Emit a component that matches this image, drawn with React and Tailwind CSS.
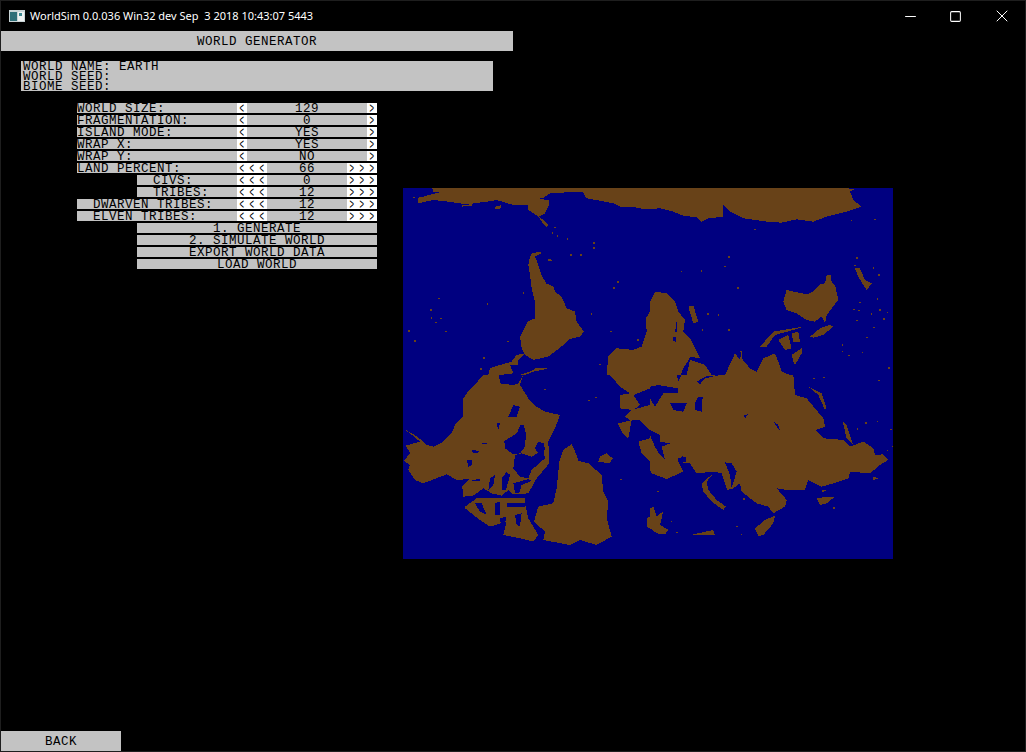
import { Minus, Square, X } from 'lucide-react'

const opciones = [
  { label: 'WORLD SIZE:', value: '129', step: 1 },
  { label: 'FRAGMENTATION:', value: '0', step: 1 },
  { label: 'ISLAND MODE:', value: 'YES', step: 1 },
  { label: 'WRAP X:', value: 'YES', step: 1 },
  { label: 'WRAP Y:', value: 'NO', step: 1 },
  { label: 'LAND PERCENT:', value: '66', step: 3 },
  { label: 'CIVS:', value: '0', step: 3, corto: true },
  { label: 'TRIBES:', value: '12', step: 3, corto: true },
  { label: 'DWARVEN TRIBES:', value: '12', step: 3, sangria: true },
  { label: 'ELVEN TRIBES:', value: '12', step: 3, sangria: true },
]

const acciones = ['1. GENERATE', '2. SIMULATE WORLD', 'EXPORT WORLD DATA', 'LOAD WORLD']

const Flechas = ({ glifo, step }) => (
  <div className={`flex bg-white ${step === 3 ? 'w-[30px]' : 'w-[10px]'}`}>
    {Array.from({ length: step }).map((_, i) => (
      <span key={i} className="w-[10px] text-center scale-x-[0.6] scale-y-[1.15]">{glifo}</span>
    ))}
  </div>
)

const Opcion = ({ label, value, step, corto, sangria }) => (
  <div className={`flex h-[10px] ${corto ? 'ml-[60px]' : ''}`}>
    <div className={`flex-1 bg-[#c3c3c3] whitespace-pre ${corto || sangria ? 'pl-[16px]' : ''}`}>{label}</div>
    <Flechas glifo="<" step={step} />
    <div className={`bg-[#c3c3c3] text-center ${step === 3 ? 'w-[80px]' : 'w-[120px]'}`}>{value}</div>
    <Flechas glifo=">" step={step} />
  </div>
)

// cuadrantes del mapa, trazados a escala 3x
const tierra = {
  q1: [
    'M97 10 L750 10 L750 72 L715 70 L700 65 L660 65 L640 55 L590 45 L565 42 L555 35 L550 22 L510 20 L480 24 L450 25 L430 38 L415 42 L447 45 L447 60 L435 85 L415 95 L400 85 L385 75 L385 60 L340 60 L290 45 L260 50 L200 58 L130 48 L100 45 L75 50 L55 55 L55 38 L70 35 L95 28 L120 22 L100 20 Z',
    'M395 205 L420 200 L425 205 L405 215 L415 240 L425 270 L438 295 L460 305 L465 320 L485 335 L500 370 L525 380 L530 410 L552 440 L540 455 L510 462 L490 480 L465 500 L445 515 L400 525 L375 510 L365 490 L360 455 L375 425 L385 408 L405 400 L405 350 L395 310 L390 270 L385 240 L390 215 Z',
    'M265 570 L270 550 L300 540 L335 530 L350 510 L375 505 L355 525 L355 540 L330 540 L340 565 L300 570 Z',
    'M360 570 L395 558 L410 548 L440 548 L440 552 L400 560 L375 570 Z',
    'M620 570 L625 515 L650 490 L700 495 L725 485 L740 440 L738 400 L750 380 L750 570 Z',
    'M415 95 L430 105 L445 120 L440 125 L425 110 Z',
    'M442 224 L450 220 L456 228 L444 228 Z',
    'M285 65 L305 60 L300 72 L285 72 Z',
    'M185 60 L215 58 L215 62 L185 65 Z',
  ],
  q2: [
    'M0 10 L590 10 L615 12 L600 20 L610 45 L635 65 L590 80 L530 95 L490 110 L440 103 L395 113 L350 110 L280 100 L240 80 L220 60 L220 95 L175 100 L155 110 L140 97 L100 92 L70 80 L30 70 L0 72 Z',
    'M400 350 L410 315 L440 322 L470 328 L490 320 L510 298 L525 295 L530 270 L542 270 L545 290 L555 300 L565 345 L545 370 L530 390 L525 415 L515 395 L495 410 L470 405 L440 385 L410 375 Z',
    'M615 250 L630 250 L645 285 L665 295 L650 315 L640 300 L625 275 Z',
    'M0 350 L15 320 L50 325 L75 350 L85 380 L105 405 L100 440 L120 460 L150 520 L122 515 L100 550 L92 570 L110 570 L120 525 L165 540 L185 570 L0 570 Z',
    'M115 365 L130 362 L145 410 L130 415 Z',
    'M225 570 L255 505 L270 525 L275 495 L275 520 L300 550 L320 560 L340 520 L375 505 L385 530 L395 560 L420 570 Z',
    'M385 465 L415 450 L425 490 L405 495 Z',
    'M480 455 L510 430 L540 420 L550 425 L520 450 L490 458 Z',
    'M330 485 L370 440 L430 430 L460 425 L430 435 L375 450 L350 485 Z',
    'M425 445 L445 440 L450 470 L430 470 Z',
    'M425 510 L455 490 L455 505 L435 540 L430 530 Z',
  ],
  q3: [
    'M250 0 L297 0 L300 25 L340 30 L355 25 L370 0 L360 30 L385 70 L410 95 L435 110 L480 120 L465 160 L445 200 L448 265 L410 310 L385 355 L340 358 L325 345 L305 362 L275 355 L250 340 L220 362 L190 365 L187 335 L210 312 L170 315 L140 298 L70 325 L45 315 L25 285 L30 270 L12 258 L30 235 L18 212 L40 205 L60 200 L30 175 L12 162 L40 178 L65 195 L80 210 L100 215 L130 200 L155 175 L165 150 L188 125 L190 70 L200 55 L225 30 L240 10 Z',
    'M195 395 L230 370 L375 370 L375 385 L385 430 L415 480 L400 500 L360 490 L310 480 L320 440 L270 455 L240 435 L195 400 Z',
    'M515 208 L530 240 L535 258 L565 265 L605 300 L610 350 L625 380 L620 430 L635 485 L590 510 L540 495 L510 510 L430 495 L435 470 L402 440 L415 395 L460 385 L470 340 L478 260 L490 225 Z',
    'M600 245 L620 235 L638 250 L630 265 L595 260 Z',
    'M630 0 L750 0 L750 40 L700 60 L720 90 L700 105 L660 100 L660 60 L690 55 L660 35 Z',
    'M675 125 L695 105 L750 90 L750 165 L720 135 L690 135 Z',
    'M655 145 L695 135 L685 190 L665 170 L655 150 Z',
    'M715 200 L750 190 L750 260 L725 235 Z',
    'M740 430 L750 425 L750 460 L740 455 Z',
  ],
  q4: [
    'M0 0 L430 0 L435 60 L470 70 L520 130 L525 155 L498 165 L520 190 L580 195 L600 215 L640 200 L670 220 L675 240 L700 238 L715 255 L690 270 L660 295 L600 290 L595 310 L550 325 L515 335 L475 315 L465 345 L410 345 L380 340 L410 375 L405 395 L370 415 L355 395 L320 385 L275 350 L270 325 L250 340 L232 345 L215 295 L190 290 L140 295 L120 265 L100 265 L100 240 L85 260 L100 290 L50 312 L5 295 L0 285 Z',
    'M155 325 L190 295 L170 320 L175 345 L200 375 L228 395 L220 405 L185 380 L160 350 Z',
    'M475 35 L515 55 L530 100 L525 105 L505 60 Z',
    'M578 140 L590 150 L610 210 L590 190 Z',
    'M315 460 L345 435 L375 422 L370 445 L340 480 L325 483 Z',
    'M500 370 L530 365 L555 365 L530 385 L510 390 Z',
    'M0 400 L10 395 L20 425 L40 408 L30 450 L55 465 L45 478 L20 475 L0 460 Z',
    'M130 478 L190 465 L195 480 L130 480 Z',
    'M670 305 L685 310 L670 315 Z',
    'M515 345 L530 345 L518 352 Z',
  ],
}

// entrantes de mar sobre la tierra
const mar = {
  q2: [
    'M78 410 L82 410 L80 440 L76 440 Z',
    'M68 455 L78 458 L78 470 L70 468 Z',
  ],
  q3: [
    'M370 148 L378 175 L375 215 L360 235 L340 238 L315 220 L313 198 L350 175 L362 150 Z',
    'M415 200 L432 205 L435 225 L415 235 L405 220 Z',
    'M345 240 L365 235 L395 245 L430 225 L435 250 L395 285 L385 310 L360 305 L340 280 Z',
    'M270 310 L285 300 L280 330 L265 345 Z',
    'M305 310 L320 290 L330 300 L318 345 L305 345 Z',
    'M340 325 L385 312 L395 318 L365 330 L358 352 L345 355 Z',
    'M215 315 L240 312 L240 318 L215 318 Z',
    'M340 90 L360 95 L350 125 L325 125 Z',
    'M290 145 L300 145 L295 165 Z',
    'M245 203 L262 203 L262 207 L245 207 Z',
    'M215 225 L240 228 L230 235 L218 232 Z',
    'M200 255 L215 255 L215 270 L205 275 Z',
    'M225 385 L245 385 L260 420 L240 410 Z',
    'M285 385 L300 380 L300 420 L285 420 Z',
    'M320 385 L375 385 L375 395 L320 395 Z',
    'M345 420 L365 415 L360 455 L350 450 Z',
    'M300 430 L320 425 L315 445 L300 442 Z',
  ],
  q4: [
    'M0 35 L25 30 L85 40 L85 55 L40 55 L15 95 L0 70 Z',
    'M60 85 L110 85 L100 110 L70 105 Z',
    'M135 85 L145 65 L158 65 L155 110 L135 105 Z',
    'M0 165 L30 180 L30 200 L60 205 L35 215 L45 255 L30 240 L15 215 L0 180 Z',
    'M85 250 L108 245 L108 262 L85 262 Z',
    'M225 262 L245 265 L260 290 L245 340 L240 300 Z',
    'M80 0 L95 0 L85 18 Z',
    'M140 20 L165 5 L210 0 L165 10 L150 28 Z',
    'M370 140 L385 150 L390 168 L380 155 Z',
    'M280 120 L295 118 L285 130 Z',
  ],
}

const puntos = {
  q1: [[115,338],[90,373],[92,397],[120,398],[105,410],[135,437],[25,436],[43,466],[322,468],[368,322],[260,355],[462,125],[455,142],[470,151],[500,160],[580,172],[580,187],[540,208],[510,208],[652,289],[640,307],[572,385],[630,438],[712,463],[597,536],[250,517],[240,550],[40,35]],
  q2: [[235,214],[223,242],[92,257],[152,256],[262,307],[312,131],[673,101],[602,104],[618,217],[612,240],[668,247],[684,268],[680,340],[628,350],[610,372],[625,375],[618,405],[662,385],[688,373],[710,380],[700,400],[670,425],[648,455],[575,478],[575,498],[595,510],[635,500],[715,547],[172,385],[203,388],[155,433],[235,433],[270,497]],
  q3: [[660,312],[565,75],[585,65],[433,42]],
  q4: [[685,15],[520,5],[490,8],[680,137],[645,142],[620,160],[720,162],[725,212],[710,225],[550,397],[258,453],[272,477],[22,348],[62,437],[78,470],[280,370]],
}

const origen = { q1: [400, 185], q2: [650, 185], q3: [400, 375], q4: [650, 375] }

const Mapa = () => (
  <svg viewBox="403 188 490 371" shapeRendering="crispEdges" className="block w-[490px] h-[371px] bg-[#000080]">
    {Object.keys(origen).map((q) => (
      <g key={q} transform={`translate(${origen[q][0]} ${origen[q][1]}) scale(0.3333)`}>
        {tierra[q].map((d, i) => <path key={i} d={d} fill="#684218" />)}
        {(mar[q] || []).map((d, i) => <path key={i} d={d} fill="#000080" />)}
        {puntos[q].map(([x, y], i) => <rect key={i} x={x} y={y} width="5" height="4" fill="#684218" />)}
      </g>
    ))}
  </svg>
)

const App = () => {
  return (
    <div className="w-[1026px] h-[752px] flex flex-col bg-black border border-[#1e1e1e] text-black font-['Liberation_Mono',monospace] text-[12.5px] tracking-[0.5px] leading-[12px] overflow-hidden">
      {/* Barra de título */}
      <div className="h-[30px] flex items-center font-['Noto_Sans',sans-serif] text-[11px] tracking-normal text-white">
        <svg width="16" height="12" viewBox="0 0 16 12" className="ml-[8px]">
          <rect width="16" height="12" fill="#c9d4d6" />
          <rect x="1" y="2" width="7" height="9" fill="#2f6f78" />
          <rect x="9" y="2" width="6" height="9" fill="#eef2f2" />
          <rect x="10" y="3" width="3" height="3" fill="#3d8790" />
        </svg>
        <span className="ml-[5px] whitespace-pre">WorldSim 0.0.036 Win32 dev Sep  3 2018 10:43:07 5443</span>
        <div className="ml-auto flex items-center mr-[13px]">
          <Minus size={17} strokeWidth={1.4} />
          <Square size={13} strokeWidth={1.85} className="ml-[30px]" />
          <X size={20} strokeWidth={1.2} className="ml-[30px]" />
        </div>
      </div>

      <div className="w-[512px] h-[20px] pt-px flex items-center justify-center bg-[#c3c3c3]">WORLD GENERATOR</div>

      <div className="w-[472px] h-[30px] mt-[10px] ml-[20px] pl-[2px] bg-[#c3c3c3] whitespace-pre">
        <div className="h-[10px]">WORLD NAME: EARTH</div>
        <div className="h-[10px]">WORLD SEED:</div>
        <div className="h-[10px]">BIOME SEED:</div>
      </div>

      <div className="flex items-start">
        <div className="w-[300px] ml-[76px] mt-[12px] flex flex-col gap-[2px]">
          {opciones.map((o) => <Opcion key={o.label} {...o} />)}
          {acciones.map((a) => (
            <div key={a} className="h-[10px] ml-[60px] bg-[#c3c3c3] text-center">{a}</div>
          ))}
        </div>
        <div className="ml-[26px] mt-[97px]">
          <Mapa />
        </div>
      </div>

      <div className="mt-auto w-[120px] h-[20px] pt-px flex items-center justify-center bg-[#c3c3c3]">BACK</div>
    </div>
  )
}

export default App
